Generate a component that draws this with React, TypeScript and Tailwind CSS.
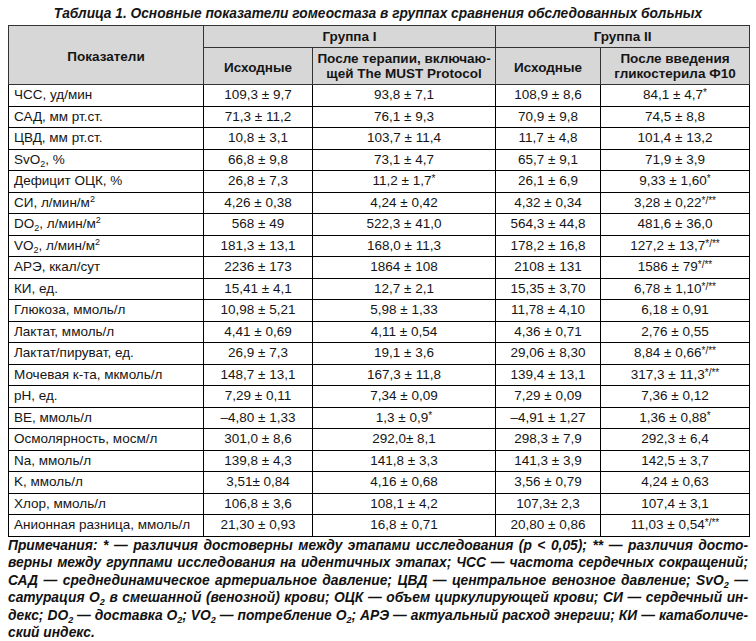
import type { ReactNode } from 'react'

type Row = {
  label: ReactNode
  cells: ReactNode[]
}

const sq = <span className="relative top-[-5px] text-[9px] leading-none">2</span>
const sub2 = <span className="relative top-[3px] text-[9px] leading-none">2</span>
const star = (v: string, mark: string) => (
  <>
    {v}
    <span className="relative top-[-3px] text-[10px] leading-none">{mark}</span>
  </>
)

const rows: Row[] = [
  { label: 'ЧСС, уд/мин', cells: ['109,3 ± 9,7', '93,8 ± 7,1', '108,9 ± 8,6', star('84,1 ± 4,7', '*')] },
  { label: 'САД, мм рт.ст.', cells: ['71,3 ± 11,2', '76,1 ± 9,3', '70,9 ± 9,8', '74,5 ± 8,8'] },
  { label: 'ЦВД, мм рт.ст.', cells: ['10,8 ± 3,1', '103,7 ± 11,4', '11,7 ± 4,8', '101,4 ± 13,2'] },
  { label: <>SvO{sub2}, %</>, cells: ['66,8 ± 9,8', '73,1 ± 4,7', '65,7 ± 9,1', '71,9 ± 3,9'] },
  { label: 'Дефицит ОЦК, %', cells: ['26,8 ± 7,3', star('11,2 ± 1,7', '*'), '26,1 ± 6,9', star('9,33 ± 1,60', '*')] },
  { label: <>СИ, л/мин/м{sq}</>, cells: ['4,26 ± 0,38', '4,24 ± 0,42', '4,32 ± 0,34', star('3,28 ± 0,22', '*/**')] },
  { label: <>DO{sub2}, л/мин/м{sq}</>, cells: ['568 ± 49', '522,3 ± 41,0', '564,3 ± 44,8', '481,6 ± 36,0'] },
  { label: <>VO{sub2}, л/мин/м{sq}</>, cells: ['181,3 ± 13,1', '168,0 ± 11,3', '178,2 ± 16,8', star('127,2 ± 13,7', '*/**')] },
  { label: 'АРЭ, ккал/сут', cells: ['2236 ± 173', '1864 ± 108', '2108 ± 131', star('1586 ± 79', '*/**')] },
  { label: 'КИ, ед.', cells: ['15,41 ± 4,1', '12,7 ± 2,1', '15,35 ± 3,70', star('6,78 ± 1,10', '*/**')] },
  { label: 'Глюкоза, ммоль/л', cells: ['10,98 ± 5,21', '5,98 ± 1,33', '11,78 ± 4,10', '6,18 ± 0,91'] },
  { label: 'Лактат, ммоль/л', cells: ['4,41 ± 0,69', '4,11 ± 0,54', '4,36 ± 0,71', '2,76 ± 0,55'] },
  { label: 'Лактат/пируват, ед.', cells: ['26,9 ± 7,3', '19,1 ± 3,6', '29,06 ± 8,30', star('8,84 ± 0,66', '*/**')] },
  { label: 'Мочевая к-та, мкмоль/л', cells: ['148,7 ± 13,1', '167,3 ± 11,8', '139,4 ± 13,1', star('317,3 ± 11,3', '*/**')] },
  { label: 'pH, ед.', cells: ['7,29 ± 0,11', '7,34 ± 0,09', '7,29 ± 0,09', '7,36 ± 0,12'] },
  { label: 'BE, ммоль/л', cells: ['–4,80 ± 1,33', star('1,3 ± 0,9', '*'), '–4,91 ± 1,27', star('1,36 ± 0,88', '*')] },
  { label: 'Осмолярность, мосм/л', cells: ['301,0 ± 8,6', '292,0± 8,1', '298,3 ± 7,9', '292,3 ± 6,4'] },
  { label: 'Na, ммоль/л', cells: ['139,8 ± 4,3', '141,8 ± 3,3', '141,3 ± 3,9', '142,5 ± 3,7'] },
  { label: 'K, ммоль/л', cells: ['3,51± 0,84', '4,16 ± 0,68', '3,56 ± 0,79', '4,24 ± 0,63'] },
  { label: 'Хлор, ммоль/л', cells: ['106,8 ± 3,6', '108,1 ± 4,2', '107,3± 2,3', '107,4 ± 3,1'] },
  { label: 'Анионная разница, ммоль/л', cells: ['21,30 ± 0,93', '16,8 ± 0,71', '20,80 ± 0,86', star('11,03 ± 0,54', '*/**')] },
]

const nsub = <span className="relative top-[3px] text-[9px] leading-none">2</span>

// one line of the notes, stretched to the full width like the printed page
function NoteLine({ children, last }: { children: ReactNode; last?: boolean }) {
  return (
    <div className={last ? 'text-left' : 'text-justify [text-align-last:justify]'}>{children}</div>
  )
}

export default function App() {
  return (
    <div className="w-[756px] h-[641px] bg-white text-[#151515] font-['Liberation_Sans',Arial,sans-serif]">
      <div className="pt-[5px] h-[25px] text-center text-[13.75px] leading-[17px] font-bold italic">
        Таблица 1. Основные показатели гомеостаза в группах сравнения обследованных больных
      </div>

      <table className="ml-[8px] w-[741px] border-collapse table-fixed text-[13.5px]">
        <colgroup>
          <col className="w-[195px]" />
          <col className="w-[109px]" />
          <col className="w-[183px]" />
          <col className="w-[105px]" />
          <col className="w-[149px]" />
        </colgroup>
        <thead className="bg-[#d7d7d7] font-bold text-[13.5px]">
          <tr className="h-[22px]">
            <th rowSpan={2} className="border border-[#333] align-middle pt-[4px]">Показатели</th>
            <th colSpan={2} className="border border-[#333] leading-[16px]">Группа I</th>
            <th colSpan={2} className="border border-[#333] leading-[16px]">Группа II</th>
          </tr>
          <tr className="h-[37px]">
            <th className="border border-[#333] pt-[4px]">Исходные</th>
            <th className="border border-[#333] leading-[15px]">
              После терапии, включаю-
              <br />
              щей The MUST Protocol
            </th>
            <th className="border border-[#333] pt-[4px]">Исходные</th>
            <th className="border border-[#333] leading-[15px]">
              После введения
              <br />
              гликостерила Ф10
            </th>
          </tr>
        </thead>
        <tbody>
          {rows.map((r, i) => (
            <tr key={i} className="h-[21.5px]">
              <td className="border border-black pl-[5px] leading-[16px] whitespace-nowrap">{r.label}</td>
              {r.cells.map((c, j) => (
                <td key={j} className="border border-black text-center leading-[16px] whitespace-nowrap">
                  {c}
                </td>
              ))}
            </tr>
          ))}
        </tbody>
      </table>

      <div className="mx-[8px] text-[13.8px] leading-[17.6px] font-bold italic text-[#111]">
        <NoteLine>
          Примечания: * — различия достоверны между этапами исследования (p &lt; 0,05); ** — различия досто-
        </NoteLine>
        <NoteLine>
          верны между группами исследования на идентичных этапах; ЧСС — частота сердечных сокращений;
        </NoteLine>
        <NoteLine>
          САД — среднединамическое артериальное давление; ЦВД — центральное венозное давление; SvO{nsub} —
        </NoteLine>
        <NoteLine>
          сатурация O{nsub} в смешанной (венозной) крови; ОЦК — объем циркулирующей крови; СИ — сердечный ин-
        </NoteLine>
        <NoteLine>
          декс; DO{nsub} — доставка O{nsub}; VO{nsub} — потребление O{nsub}; АРЭ — актуальный расход энергии; КИ — катаболиче-
        </NoteLine>
        <NoteLine last>ский индекс.</NoteLine>
      </div>
    </div>
  )
}
